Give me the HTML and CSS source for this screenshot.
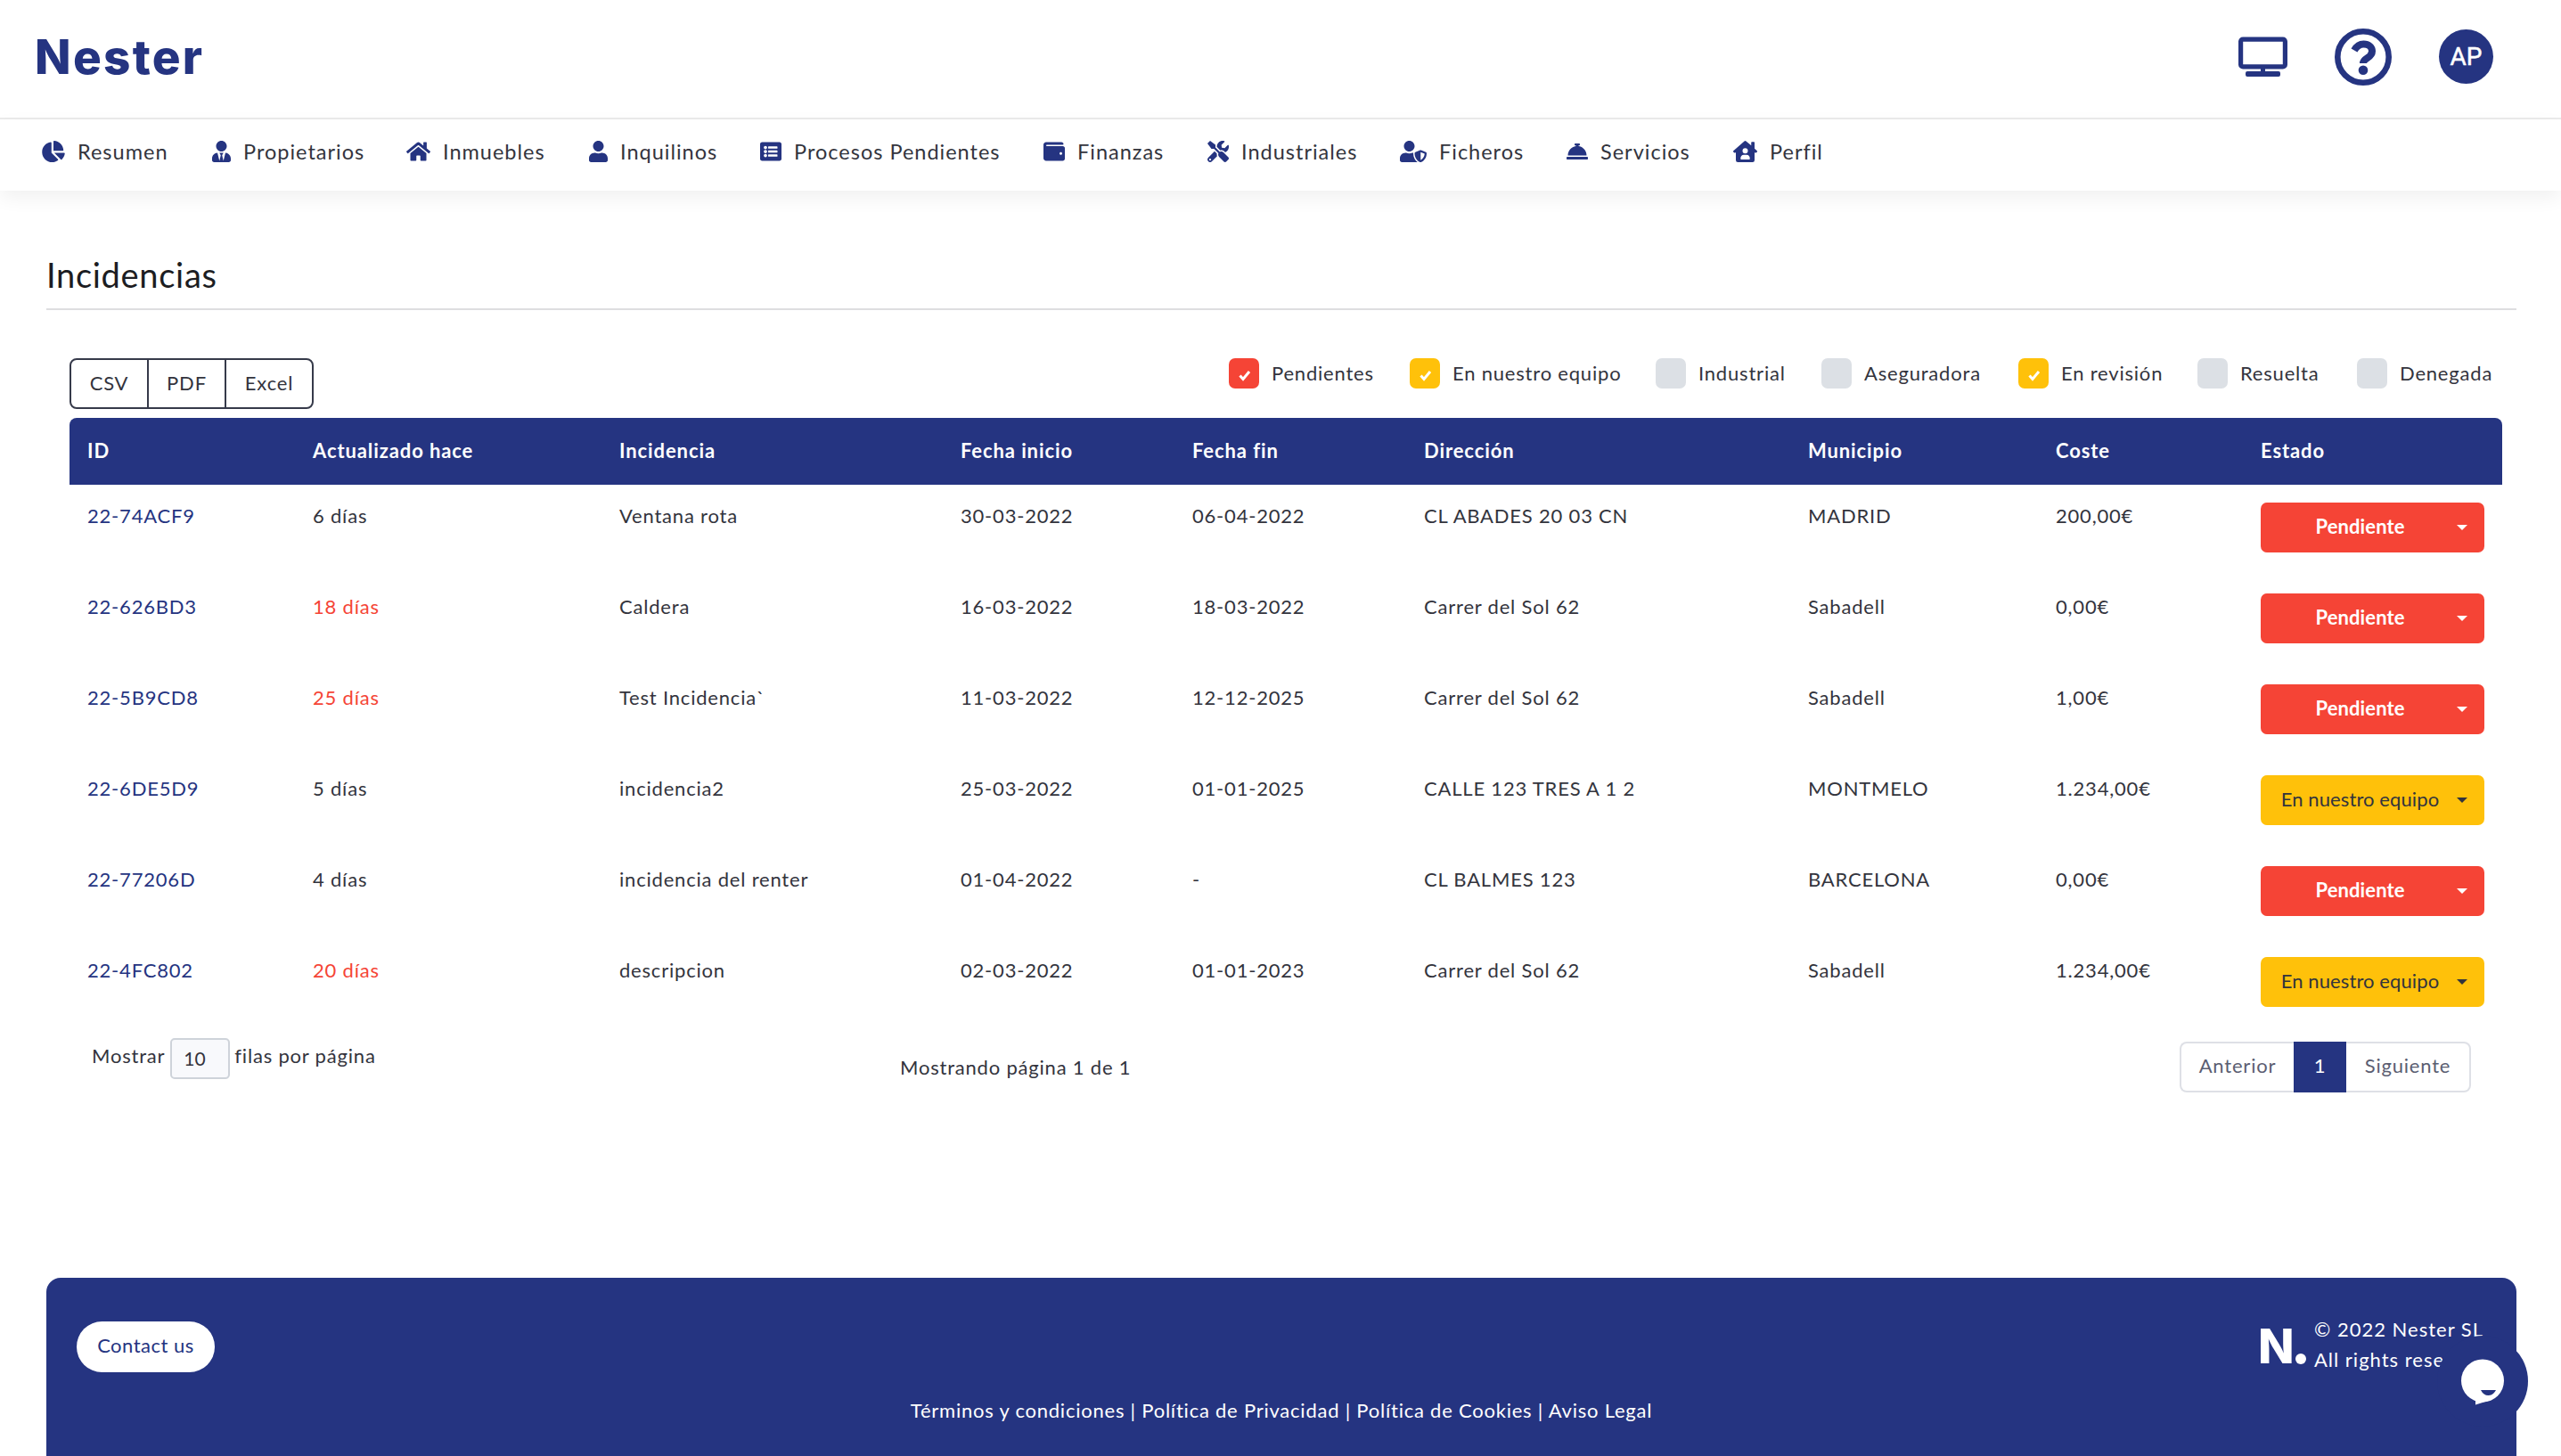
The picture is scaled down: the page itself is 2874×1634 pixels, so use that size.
FILE: index.html
```html
<!DOCTYPE html>
<html lang="es">
<head>
  <meta charset="UTF-8" />
  <title>Nester — Incidencias</title>
  <link rel="stylesheet" href="styles.css">
</head>
<body>
  <header class="topbar">
    <a class="logo">Nester</a>
    <div class="topbar-actions">
      <svg class="icon-screen" viewBox="0 0 55 46"><rect x="2.6" y="3.1" width="49.8" height="30.8" rx="2.5" fill="none" stroke="currentColor" stroke-width="5.2"/><path d="M25 35h5v4h15q2 0 2 2v2q0 2-2 2H10q-2 0-2-2v-2q0-2 2-2h15z" fill="currentColor"/></svg>
      <svg class="icon-help" viewBox="0 0 64 64"><g fill="none" stroke="currentColor"><circle cx="32" cy="32" r="28.7" stroke-width="6.6"/><path d="M22 24.500Q26 17.500 32.500 17.500C38 17.500 42 21 42 25.500C42 33.500 32 32.500 32 39" stroke-width="8"/></g><circle cx="32" cy="46.800" r="5.300" fill="currentColor"/></svg>
      <div class="avatar">AP</div>
    </div>
  </header>

  <nav class="menu">
    <a class="menu-item"><svg class="w26" viewBox="0 0 544 512"><path d="M527.79 288H290.5l158.03 158.03c6.04 6.04 15.98 6.53 22.19.68 38.7-36.46 65.32-85.61 73.13-140.86 1.34-9.46-6.51-17.85-16.06-17.85zm-15.83-64.8C503.72 103.74 408.26 8.28 288.8.04 279.68-.59 272 7.1 272 16.24V240h223.77c9.14 0 16.82-7.68 16.19-16.8zM224 288V50.71c0-9.55-8.39-17.4-17.84-16.06C86.99 51.49-4.1 155.6.14 280.37 4.5 408.51 114.83 513.59 243.03 511.98c50.4-.63 96.97-16.87 135.26-44.03 7.9-5.6 8.42-17.23 1.57-24.08L224 288z"/></svg>Resumen</a>
    <a class="menu-item"><svg class="w21" viewBox="0 0 448 512"><path d="M224 256c70.7 0 128-57.3 128-128S294.7 0 224 0 96 57.3 96 128s57.3 128 128 128zm95.8 32.6L272 480l-32-136 32-56h-96l32 56-32 136-47.8-191.4C56.9 292 0 350.3 0 422.4V464c0 26.5 21.5 48 48 48h352c26.5 0 48-21.5 48-48v-41.6c0-72.1-56.9-130.4-128.2-133.8z"/></svg>Propietarios</a>
    <a class="menu-item"><svg class="w27" viewBox="0 0 576 512"><path d="M280.37 148.26L96 300.11V464a16 16 0 0 0 16 16l112.06-.29a16 16 0 0 0 15.92-16V368a16 16 0 0 1 16-16h64a16 16 0 0 1 16 16v95.64a16 16 0 0 0 16 16.05L464 480a16 16 0 0 0 16-16V300L295.67 148.26a12.19 12.19 0 0 0-15.3 0zM571.6 251.47L488 182.56V44.05a12 12 0 0 0-12-12h-56a12 12 0 0 0-12 12v72.61L318.47 43a48 48 0 0 0-61 0L4.34 251.47a12 12 0 0 0-1.6 16.9l25.5 31A12 12 0 0 0 45.15 301l235.22-193.74a12.19 12.19 0 0 1 15.3 0L530.9 301a12 12 0 0 0 16.9-1.6l25.5-31a12 12 0 0 0-1.7-16.93z"/></svg>Inmuebles</a>
    <a class="menu-item"><svg class="w21" viewBox="0 0 448 512"><path d="M224 256c70.7 0 128-57.3 128-128S294.7 0 224 0 96 57.3 96 128s57.3 128 128 128zm89.6 32h-16.7c-22.2 10.2-46.9 16-72.9 16s-50.6-5.8-72.9-16h-16.7C60.2 288 0 348.2 0 422.4V464c0 26.5 21.5 48 48 48h352c26.5 0 48-21.5 48-48v-41.6c0-74.2-60.2-134.4-134.4-134.4z"/></svg>Inquilinos</a>
    <a class="menu-item"><svg class="w24" viewBox="0 0 512 512"><path d="M464 480H48c-26.51 0-48-21.49-48-48V80c0-26.51 21.49-48 48-48h416c26.51 0 48 21.49 48 48v352c0 26.51-21.49 48-48 48zM128 120c-22.091 0-40 17.909-40 40s17.909 40 40 40 40-17.909 40-40-17.909-40-40-40zm0 96c-22.091 0-40 17.909-40 40s17.909 40 40 40 40-17.909 40-40-17.909-40-40-40zm0 96c-22.091 0-40 17.909-40 40s17.909 40 40 40 40-17.909 40-40-17.909-40-40-40zm288-136v-32c0-6.627-5.373-12-12-12H204c-6.627 0-12 5.373-12 12v32c0 6.627 5.373 12 12 12h200c6.627 0 12-5.373 12-12zm0 96v-32c0-6.627-5.373-12-12-12H204c-6.627 0-12 5.373-12 12v32c0 6.627 5.373 12 12 12h200c6.627 0 12-5.373 12-12zm0 96v-32c0-6.627-5.373-12-12-12H204c-6.627 0-12 5.373-12 12v32c0 6.627 5.373 12 12 12h200c6.627 0 12-5.373 12-12z"/></svg>Procesos Pendientes</a>
    <a class="menu-item"><svg class="w24" viewBox="0 0 512 512"><path d="M461.2 128H80c-8.84 0-16-7.16-16-16s7.16-16 16-16h384c8.84 0 16-7.16 16-16 0-26.51-21.49-48-48-48H64C28.65 32 0 60.65 0 96v320c0 35.35 28.65 64 64 64h397.2c28.02 0 50.8-21.53 50.8-48V176c0-26.47-22.78-48-50.8-48zM416 336c-17.67 0-32-14.33-32-32s14.33-32 32-32 32 14.33 32 32-14.33 32-32 32z"/></svg>Finanzas</a>
    <a class="menu-item"><svg class="w24" viewBox="0 0 512 512"><path d="M501.1 395.7L384 278.6c-23.1-23.1-57.6-27.6-85.4-13.9L192 158.1V96L64 0 0 64l96 128h62.1l106.6 106.6c-13.6 27.8-9.2 62.3 13.9 85.4l117.1 117.1c14.6 14.6 38.2 14.6 52.7 0l52.7-52.7c14.5-14.6 14.5-38.2 0-52.7zM331.7 225c28.3 0 54.9 11 74.9 31l19.4 19.4c15.8-6.9 30.8-16.5 43.8-29.5 37.1-37.1 49.7-89.3 37.9-136.7-2.2-9-13.5-12.1-20.1-5.5l-74.4 74.4-67.9-11.3L334 98.9l74.4-74.4c6.6-6.6 3.4-17.9-5.7-20.2-47.4-11.7-99.6.9-136.6 37.9-28.5 28.5-41.9 66.1-41.2 103.6l82.1 82.1c8.1-1.9 16.5-2.9 24.7-2.9zm-103.9 82l-56.7-56.7L18.7 402.8c-25 25-25 65.5 0 90.5s65.5 25 90.5 0l123.6-123.6c-7.6-19.9-9.9-41.6-5-62.7zM64 472c-13.2 0-24-10.8-24-24 0-13.3 10.7-24 24-24s24 10.7 24 24c0 13.2-10.7 24-24 24z"/></svg>Industriales</a>
    <a class="menu-item"><svg class="w30" viewBox="0 0 640 512"><path d="M622.3 271.1l-115.2-45c-4.1-1.6-12.6-3.7-22.2 0l-115.2 45c-10.7 4.2-17.7 14-17.7 24.9 0 111.6 68.7 188.8 132.9 213.9 9.6 3.7 18 1.6 22.2 0C558.4 489.9 640 420.5 640 296c0-10.9-7-20.7-17.7-24.9zM496 462.4V273.3l95.5 37.3c-5.6 87.1-60.9 135.4-95.5 151.8zM224 256c70.7 0 128-57.3 128-128S294.7 0 224 0 96 57.3 96 128s57.3 128 128 128zm96 40c0-2.5.8-4.8 1.1-7.2-2.5-.1-4.9-.8-7.5-.8h-16.7c-22.2 10.2-46.9 16-72.9 16s-50.6-5.8-72.9-16h-16.7C60.2 288 0 348.2 0 422.4V464c0 26.5 21.5 48 48 48h352c6.8 0 13.3-1.500 19.2-4-54-42.9-99.2-116.7-99.2-212z"/></svg>Ficheros</a>
    <a class="menu-item"><svg class="w24" viewBox="0 0 512 512"><path d="M288 130.54V112h16c8.84 0 16-7.16 16-16V80c0-8.84-7.16-16-16-16h-96c-8.84 0-16 7.16-16 16v16c0 8.84 7.16 16 16 16h16v18.54C115.49 146.11 32 239.18 32 352h448c0-112.82-83.49-205.89-192-221.46zM496 384H16c-8.84 0-16 7.16-16 16v32c0 8.84 7.16 16 16 16h480c8.84 0 16-7.16 16-16v-32c0-8.84-7.16-16-16-16z"/></svg>Servicios</a>
    <a class="menu-item"><svg class="w27" viewBox="0 0 576 512"><path fill-rule="evenodd" d="M570 238L512 185V40q0-16-16-16h-48q-16 0-16 16v72L309 8q-21-16-42 0L6 238q-14 15 0 30l16 14q12 10 26 4l16-8v186q0 48 48 48h352q48 0 48-48V278l16 8q14 6 26-4l16-14q14-15 0-30zM288 176a64 64 0 1 1 0 128a64 64 0 1 1 0-128zM176 432q0-96 80-96h64q80 0 80 96q0 16-16 16H192q-16 0-16-16z"/></svg>Perfil</a>
  </nav>

  <main class="content">
    <h1>Incidencias</h1>

    <section class="panel">
      <div class="toolbar">
        <div class="export">
          <button>CSV</button>
          <button>PDF</button>
          <button>Excel</button>
        </div>
        <div class="filters">
          <label><span class="check red"><svg viewBox="0 0 34 34"><path d="M12.500 19.500l3.500 4 7-8.500"/></svg></span>Pendientes</label>
          <label><span class="check yellow"><svg viewBox="0 0 34 34"><path d="M12.500 19.500l3.500 4 7-8.500"/></svg></span>En nuestro equipo</label>
          <label><span class="check"></span>Industrial</label>
          <label><span class="check"></span>Aseguradora</label>
          <label><span class="check yellow"><svg viewBox="0 0 34 34"><path d="M12.500 19.500l3.500 4 7-8.500"/></svg></span>En revisión</label>
          <label><span class="check"></span>Resuelta</label>
          <label><span class="check"></span>Denegada</label>
        </div>
      </div>

      <table class="incidents">
        <colgroup>
          <col class="c-id"><col class="c-updated"><col class="c-name"><col class="c-date"><col class="c-date"><col class="c-address"><col class="c-city"><col class="c-cost"><col class="c-state">
        </colgroup>
        <thead>
          <tr><th>ID</th><th>Actualizado hace</th><th>Incidencia</th><th>Fecha inicio</th><th>Fecha fin</th><th>Dirección</th><th>Municipio</th><th>Coste</th><th>Estado</th></tr>
        </thead>
        <tbody>
          <tr><td><a>22-74ACF9</a></td><td>6 días</td><td>Ventana rota</td><td>30-03-2022</td><td>06-04-2022</td><td>CL ABADES 20 03 CN</td><td>MADRID</td><td>200,00€</td><td><button class="state red"><span>Pendiente</span><i></i></button></td></tr>
          <tr><td><a>22-626BD3</a></td><td class="late">18 días</td><td>Caldera</td><td>16-03-2022</td><td>18-03-2022</td><td>Carrer del Sol 62</td><td>Sabadell</td><td>0,00€</td><td><button class="state red"><span>Pendiente</span><i></i></button></td></tr>
          <tr><td><a>22-5B9CD8</a></td><td class="late">25 días</td><td>Test Incidencia`</td><td>11-03-2022</td><td>12-12-2025</td><td>Carrer del Sol 62</td><td>Sabadell</td><td>1,00€</td><td><button class="state red"><span>Pendiente</span><i></i></button></td></tr>
          <tr><td><a>22-6DE5D9</a></td><td>5 días</td><td>incidencia2</td><td>25-03-2022</td><td>01-01-2025</td><td>CALLE 123 TRES A 1 2</td><td>MONTMELO</td><td>1.234,00€</td><td><button class="state yellow"><span>En nuestro equipo</span><i></i></button></td></tr>
          <tr><td><a>22-77206D</a></td><td>4 días</td><td>incidencia del renter</td><td>01-04-2022</td><td>-</td><td>CL BALMES 123</td><td>BARCELONA</td><td>0,00€</td><td><button class="state red"><span>Pendiente</span><i></i></button></td></tr>
          <tr><td><a>22-4FC802</a></td><td class="late">20 días</td><td>descripcion</td><td>02-03-2022</td><td>01-01-2023</td><td>Carrer del Sol 62</td><td>Sabadell</td><td>1.234,00€</td><td><button class="state yellow"><span>En nuestro equipo</span><i></i></button></td></tr>
        </tbody>
      </table>

      <div class="table-footer">
        <div class="page-size"><span>Mostrar</span><span class="select">10</span><span>filas por página</span></div>
        <div class="page-info">Mostrando página 1 de 1</div>
        <div class="pagination"><a class="prev">Anterior</a><a class="active">1</a><a class="next">Siguiente</a></div>
      </div>
    </section>
  </main>

  <footer class="footer">
    <div class="footer-row">
      <button class="contact">Contact us</button>
      <div class="brand">
        <span class="brand-logo">N<i></i></span>
        <p>© 2022 Nester SL<br>All rights reserved</p>
      </div>
    </div>
    <p class="legal">Términos y condiciones | Política de Privacidad | Política de Cookies | Aviso Legal</p>
  </footer>

  <div class="chat">
    <svg viewBox="0 0 102 102"><circle cx="51" cy="50.500" r="24" fill="#fff"/><path d="M43 72v5.500l16-5z" fill="#fff"/><path d="M49 61h17q-3 6-8.500 6t-8.500-6z" fill="#253481"/></svg>
  </div>
</body>
</html>
```
FILE: styles.css
```css
* {
  box-sizing: border-box;
}
body {
  margin: 0;
  height: 1634px;
  display: flex;
  flex-direction: column;
  overflow: hidden;
  background: #fff;
  color: #33343d;
  font-family: Lato, sans-serif;
  font-size: 22px;
  letter-spacing: 0.8px;
}
button {
  font: inherit;
  letter-spacing: inherit;
  border: none;
  margin: 0;
  padding: 0;
}
p {
  margin: 0;
}

/* cabecera */
.topbar {
  height: 134px;
  flex: none;
  display: flex;
  justify-content: space-between;
  align-items: flex-start;
  padding: 32px 76px 0 39px;
  border-bottom: 2px solid #ebebeb;
  color: #253481;
}
.logo {
  font-family: Inter, sans-serif;
  font-size: 53px;
  font-weight: 800;
  line-height: 64px;
  letter-spacing: 2.3px;
}
.topbar-actions {
  display: flex;
  align-items: center;
  line-height: 1;
}
.icon-screen {
  width: 55px;
  height: 46px;
  margin-right: 53px;
}
.icon-help {
  width: 64px;
  height: 64px;
  margin-right: 53px;
}
.avatar {
  width: 61px;
  height: 61px;
  margin-bottom: 2px;
  border-radius: 50%;
  background: #253481;
  color: #fff;
  font: 400 28px/61px Roboto, sans-serif;
  -webkit-text-stroke: 0.5px #fff;
  letter-spacing: 0;
  text-align: center;
}

/* menu */
.menu {
  height: 80px;
  flex: none;
  display: grid;
  grid-template-columns: 191px 218px 205px 192px 318px 184px 216px 187px 187px auto;
  padding: 18px 0 0 47px;
  font-size: 23.5px;
  line-height: 34px;
  letter-spacing: 1px;
  box-shadow: 0 8px 20px rgba(0,0,0,0.06);
}
.menu-item {
  display: flex;
  align-items: center;
  gap: 14px;
  height: 36px;
  white-space: nowrap;
}
.menu-item svg {
  height: 24px;
  fill: #253481;
}
.w21 { width: 21px; }
.w24 { width: 24px; }
.w26 { width: 26px; }
.w27 { width: 27px; }
.w30 { width: 30px; }

/* contenido */
.content {
  height: 1220px;
  flex: none;
  padding: 70px 50px 0 52px;
}
h1 {
  margin: 0;
  height: 64px;
  border-bottom: 2px solid #dedee0;
  color: #1c1d22;
  font-size: 38px;
  font-weight: 400;
  line-height: 48px;
  letter-spacing: 0.7px;
}
.panel {
  padding: 54px 16px 0 26px;
}
.toolbar {
  display: flex;
  justify-content: space-between;
  align-items: flex-start;
  height: 67px;
}
.export {
  display: flex;
}
.export button {
  height: 57px;
  width: 89px;
  margin-left: -2px;
  padding-bottom: 3px;
  border: 2px solid #363a4a;
  background: #fff;
  color: #33343d;
}
.export button:first-child {
  margin-left: 0;
  border-radius: 8px 0 0 8px;
}
.export button:last-child {
  width: 100px;
  border-radius: 0 8px 8px 0;
}
.filters {
  display: grid;
  grid-template-columns: 203px 276px 186px 221px 201px 179px 163px;
}
.filters label {
  display: flex;
  align-items: center;
  gap: 14px;
  height: 34px;
  line-height: 24px;
  white-space: nowrap;
}
.check {
  width: 34px;
  height: 34px;
  border-radius: 7px;
  background: #dce0e5;
}
.check svg {
  display: block;
  fill: none;
  stroke: #fff;
  stroke-width: 3;
}
.check.red, .state.red {
  background: #f54436;
}
.check.yellow, .state.yellow {
  background: #ffc10a;
}

/* tabla */
.incidents {
  width: 2730px;
  table-layout: fixed;
  border-collapse: separate;
  border-spacing: 0;
}
.c-id { width: 253px; }
.c-updated { width: 344px; }
.c-name { width: 383px; }
.c-date { width: 260px; }
.c-address { width: 431px; }
.c-city { width: 278px; }
.c-cost { width: 230px; }
.c-state { width: 291px; }
.incidents th {
  height: 75px;
  padding: 0 20px 3px;
  background: #253481;
  color: #fff;
  text-align: left;
  font-weight: 700;
  letter-spacing: 0.9px;
}
.incidents th:first-child {
  border-top-left-radius: 8px;
}
.incidents th:last-child {
  border-top-right-radius: 8px;
}
.incidents td {
  height: 102px;
  padding: 20px 20px 0;
  vertical-align: top;
  line-height: 30px;
}
.incidents a {
  color: #253481;
}
.incidents .late {
  color: #f54436;
}
.state {
  width: 251px;
  height: 56px;
  display: flex;
  align-items: center;
  padding: 0 19px 3px 13px;
  border-radius: 7px;
  color: #fff;
  white-space: nowrap;
}
.state span {
  flex: 1;
  text-align: center;
  padding-right: 10px;
}
.state.red span {
  font-weight: 700;
  letter-spacing: 0.1px;
}
.state.yellow {
  color: #33343d;
  letter-spacing: 0.1px;
}
.state i {
  border: 6px solid transparent;
  border-top-color: currentColor;
  border-bottom: 0;
  margin-top: 3px;
}

.table-footer {
  display: grid;
  grid-template-columns: 932px 1436px auto;
}
.page-size {
  display: flex;
  padding: 9px 0 0 25px;
  line-height: 40px;
}
.select {
  width: 67px;
  height: 46px;
  margin: 0 5px 0 6px;
  padding-left: 13px;
  border: 2px solid #ced3da;
  border-radius: 5px;
  background: #f8f9fc;
  font-size: 21px;
  letter-spacing: 0;
  line-height: 41px;
}
.page-info {
  padding-top: 26px;
  line-height: 32px;
}
.pagination {
  display: flex;
  padding-top: 13px;
}
.pagination a {
  height: 57px;
  border: 2px solid #dee0e6;
  color: #5b5e72;
  line-height: 49px;
  text-align: center;
}
.pagination .prev {
  width: 128px;
  border-right: 0;
  border-radius: 8px 0 0 8px;
}
.pagination .active {
  width: 59px;
  border-color: #253481;
  background: #253481;
  color: #fff;
}
.pagination .next {
  width: 140px;
  border-left: 0;
  border-radius: 0 8px 8px 0;
}

/* pie */
.footer {
  flex: 1;
  margin: 0 50px 0 52px;
  padding: 40px 34px 0;
  border-radius: 16px 16px 0 0;
  background: #253481;
  color: #fff;
}
.footer-row {
  display: flex;
  justify-content: space-between;
  height: 92px;
}
.contact {
  width: 155px;
  height: 57px;
  margin-top: 9px;
  padding-bottom: 4px;
  border-radius: 29px;
  background: #fff;
  color: #253481;
  letter-spacing: 0.5px;
}
.brand {
  display: flex;
  width: 259px;
  line-height: 34px;
  letter-spacing: 1px;
  white-space: nowrap;
}
.brand p {
  padding-top: 1px;
}
.brand-logo {
  display: flex;
  width: 63px;
  margin-left: 3px;
  flex: none;
  letter-spacing: 0;
  font: 800 53px/74px Inter, sans-serif;
}
.brand-logo i {
  width: 12px;
  height: 12px;
  margin: 45px 0 0 1px;
  border-radius: 50%;
  background: #fff;
}
.legal {
  text-align: center;
  line-height: 34px;
  letter-spacing: 0.77px;
}

/* burbuja del chat, fija sobre la página */
.chat {
  position: absolute;
  left: 2735px;
  top: 1499px;
  width: 102px;
  height: 102px;
  border-radius: 50%;
  background: #253481;
}
.chat svg {
  display: block;
}
```
